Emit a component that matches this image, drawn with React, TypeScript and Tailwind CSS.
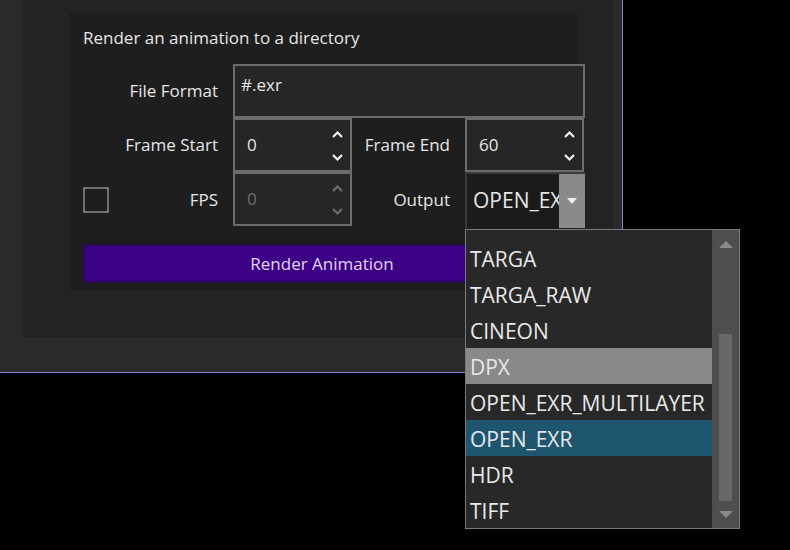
import React from "react";

const font = { fontFamily: '"Open Sans", "Noto Sans", sans-serif' };

function Caret({ up, dim }: { up?: boolean; dim?: boolean }) {
  return (
    <svg width="11" height="7" viewBox="0 0 11 7" className="block">
      <polyline
        points={up ? "1,6 5.5,1.5 10,6" : "1,1 5.5,5.5 10,1"}
        fill="none"
        stroke={dim ? "#6e6e6e" : "#f0f0f0"}
        strokeWidth="2.2"
      />
    </svg>
  );
}

function Spin({ value, dim }: { value: string; dim?: boolean }) {
  return (
    <div className="h-[54px] flex items-center border-2 border-[#6c6c6c] bg-[#262626] mr-[1px]">
      <span className={`flex-1 pl-[12px] text-[17px] ${dim ? "text-[#707070]" : "text-[#e6e6e6]"}`}>{value}</span>
      <div className="flex flex-col items-center justify-between h-full pt-[11px] pb-[9px] pr-[7px]">
        <Caret up dim={dim} />
        <Caret dim={dim} />
      </div>
    </div>
  );
}

const items = ["TARGA", "TARGA_RAW", "CINEON", "DPX", "OPEN_EXR_MULTILAYER", "OPEN_EXR", "HDR", "TIFF"];

export default function App() {
  return (
    <div className="relative w-[790px] h-[550px] bg-black overflow-hidden" style={font}>
      <div className="w-[623px] h-[373px] bg-[#2a2a2a] border-r border-b border-[#8a82d6]">
        <div className="ml-[23px] w-[590px] h-[337px] bg-[#232323] pt-[12px] pl-[46px]">
          <div className="w-[509px] h-[278px] bg-[#1e1e1e] pl-[14px] pt-[14px]">
            <div className="text-[17px] leading-[23px] text-[#e6e6e6]">Render an animation to a directory</div>
            <div className="mt-[15px] w-[502px] grid grid-cols-[150px_120px_112px_120px] grid-rows-[54px_54px_56px]">
              <div className="flex items-center justify-end pr-[15px] text-[17px] text-[#e6e6e6]">File Format</div>
              <div className="col-span-3 h-[54px] border-2 border-[#6c6c6c] bg-[#262626] pl-[6px] pt-[7px] text-[17px] leading-[23px] text-[#e6e6e6]">
                #.exr
              </div>

              <div className="flex items-center justify-end pr-[15px] text-[17px] text-[#e6e6e6]">Frame Start</div>
              <Spin value="0" />
              <div className="flex items-center justify-end pr-[15px] text-[17px] text-[#e6e6e6]">Frame End</div>
              <Spin value="60" />

              <div className="flex items-center pr-[15px]">
                <div className="w-[26px] h-[26px] border-2 border-[#707070]" />
                <span className="ml-auto text-[17px] text-[#e6e6e6]">FPS</span>
              </div>
              <Spin value="0" dim />
              <div className="flex items-center justify-end pr-[15px] text-[17px] text-[#e6e6e6]">Output</div>
              <div className="h-[56px] flex border-l-2 border-t-2 border-[#3a3a3a]">
                <div className="w-[92px] bg-[#1b1b1b] overflow-hidden flex items-center pl-[6px] text-[21px] text-[#e6e6e6] whitespace-nowrap">
                  OPEN_EXR
                </div>
                <div className="flex-1 bg-[#8a8a8a] flex items-center justify-center">
                  <svg width="10" height="6" viewBox="0 0 10 6">
                    <polygon points="0,0 10,0 5,6" fill="#eeeeee" />
                  </svg>
                </div>
              </div>
            </div>
            <button className="mt-[16px] w-[478px] h-[39px] bg-[#3c0086] border-2 border-[#2a0a55] text-[17px] text-[#e4d4f4] flex items-center justify-center">
              Render Animation
            </button>
          </div>
        </div>
      </div>

      <div className="absolute left-[465px] top-[229px] w-[275px] h-[300px] border border-[#7a7a7a] bg-[#282828] flex">
        <div className="w-[246px] pt-[10px]">
          {items.map((it) => (
            <div
              key={it}
              className={`h-[36px] flex items-center pl-[4px] pt-[3px] text-[21px] whitespace-nowrap ${
                it === "DPX" ? "bg-[#898989] text-[#e8e8e8]" : it === "OPEN_EXR" ? "bg-[#1e5670] text-[#e8e8e8]" : "text-[#e8e8e8]"
              }`}
            >
              {it}
            </div>
          ))}
        </div>
        <div className="flex-1 bg-[#4e4e4e] flex flex-col items-center">
          <svg width="14" height="7" viewBox="0 0 14 7" className="mt-[11px]">
            <polygon points="0,7 14,7 7,0" fill="#8a8a8a" />
          </svg>
          <div className="mt-[86px] w-[13px] h-[167px] bg-[#686868]" />
          <svg width="14" height="7" viewBox="0 0 14 7" className="mt-[10px]">
            <polygon points="0,0 14,0 7,7" fill="#8a8a8a" />
          </svg>
        </div>
      </div>
    </div>
  );
}
